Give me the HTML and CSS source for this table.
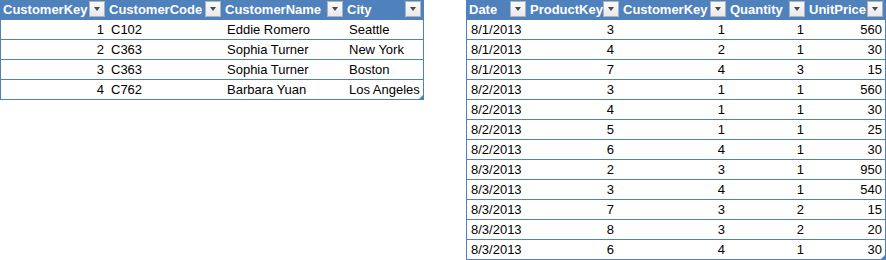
FILE: index.html
```html
<!DOCTYPE html>
<html>
<head>
<meta charset="utf-8">
<link rel="stylesheet" href="styles.css">
</head>
<body>
<div class="page">
  <div class="tbl t1">
    <div class="row head">
      <div class="hc"><span>CustomerKey</span><i class="dd"></i></div>
      <div class="hc"><span>CustomerCode</span><i class="dd"></i></div>
      <div class="hc"><span>CustomerName</span><i class="dd"></i></div>
      <div class="hc"><span>City</span><i class="dd"></i></div>
    </div>
    <div class="row"><div class="c num">1</div><div class="c">C102</div><div class="c">Eddie Romero</div><div class="c">Seattle</div></div>
    <div class="row"><div class="c num">2</div><div class="c">C363</div><div class="c">Sophia Turner</div><div class="c">New York</div></div>
    <div class="row"><div class="c num">3</div><div class="c">C363</div><div class="c">Sophia Turner</div><div class="c">Boston</div></div>
    <div class="row"><div class="c num">4</div><div class="c">C762</div><div class="c">Barbara Yuan</div><div class="c">Los Angeles</div></div>
    <i class="grip"></i>
  </div>
  <div class="tbl t2">
    <div class="row head">
      <div class="hc"><span>Date</span><i class="dd"></i></div>
      <div class="hc"><span>ProductKey</span><i class="dd"></i></div>
      <div class="hc"><span>CustomerKey</span><i class="dd"></i></div>
      <div class="hc"><span>Quantity</span><i class="dd"></i></div>
      <div class="hc"><span>UnitPrice</span><i class="dd"></i></div>
    </div>
    <div class="row"><div class="c">8/1/2013</div><div class="c num pk">3</div><div class="c num">1</div><div class="c num">1</div><div class="c num">560</div></div>
    <div class="row"><div class="c">8/1/2013</div><div class="c num pk">4</div><div class="c num">2</div><div class="c num">1</div><div class="c num">30</div></div>
    <div class="row"><div class="c">8/1/2013</div><div class="c num pk">7</div><div class="c num">4</div><div class="c num">3</div><div class="c num">15</div></div>
    <div class="row"><div class="c">8/2/2013</div><div class="c num pk">3</div><div class="c num">1</div><div class="c num">1</div><div class="c num">560</div></div>
    <div class="row"><div class="c">8/2/2013</div><div class="c num pk">4</div><div class="c num">1</div><div class="c num">1</div><div class="c num">30</div></div>
    <div class="row"><div class="c">8/2/2013</div><div class="c num pk">5</div><div class="c num">1</div><div class="c num">1</div><div class="c num">25</div></div>
    <div class="row"><div class="c">8/2/2013</div><div class="c num pk">6</div><div class="c num">4</div><div class="c num">1</div><div class="c num">30</div></div>
    <div class="row"><div class="c">8/3/2013</div><div class="c num pk">2</div><div class="c num">3</div><div class="c num">1</div><div class="c num">950</div></div>
    <div class="row"><div class="c">8/3/2013</div><div class="c num pk">3</div><div class="c num">4</div><div class="c num">1</div><div class="c num">540</div></div>
    <div class="row"><div class="c">8/3/2013</div><div class="c num pk">7</div><div class="c num">3</div><div class="c num">2</div><div class="c num">15</div></div>
    <div class="row"><div class="c">8/3/2013</div><div class="c num pk">8</div><div class="c num">3</div><div class="c num">2</div><div class="c num">20</div></div>
    <div class="row"><div class="c">8/3/2013</div><div class="c num pk">6</div><div class="c num">4</div><div class="c num">1</div><div class="c num">30</div></div>
    <i class="grip"></i>
  </div>
</div>
</body>
</html>
```
FILE: styles.css
```css
html, body {
  margin: 0;
  padding: 0;
  background: #ffffff;
}
body {
  font-family: "Liberation Sans", Arial, sans-serif;
  font-size: 13px;
  color: #000000;
}
.page {
  display: flex;
  align-items: flex-start;
  gap: 42px;
}
.tbl {
  position: relative;
  box-sizing: border-box;
  border-left: 1px solid #4f81bd;
  border-right: 1px solid #4f81bd;
}
.t1 { width: 424px; }
.t2 { width: 420px; }
.row {
  display: grid;
  height: 20px;
  box-sizing: border-box;
  border-bottom: 1px solid #4f81bd;
}
.t1 .row { grid-template-columns: 106px 116px 122px 78px; }
.t2 .row { grid-template-columns: 61px 93px 107px 79px 78px; }
.row.head {
  background: #4f81bd;
  border-bottom: none;
}
.hc {
  display: flex;
  align-items: flex-start;
  justify-content: space-between;
  color: #ffffff;
  font-weight: bold;
  padding-left: 2px;
  padding-right: 2px;
  overflow: hidden;
  white-space: nowrap;
  line-height: 20px;
}
.hc span { overflow: hidden; }
.dd {
  flex: 0 0 auto;
  width: 16px;
  height: 16px;
  margin-top: 1px;
  box-sizing: border-box;
  border: 1px solid #a9b4c2;
  background: linear-gradient(#fbfbfb, #e9e9e9);
  position: relative;
}
.dd::after {
  content: "";
  position: absolute;
  left: 4px;
  top: 5px;
  border-left: 3.5px solid transparent;
  border-right: 3.5px solid transparent;
  border-top: 4px solid #4a4a4a;
}
.c {
  padding: 0 4px;
  line-height: 19px;
  white-space: nowrap;
  overflow: visible;
}
.num {
  text-align: right;
  padding-right: 3px;
}
.num.pk { padding-right: 7px; }
.grip {
  position: absolute;
  right: 0;
  bottom: 1px;
  width: 0;
  height: 0;
  border-left: 4px solid transparent;
  border-bottom: 4px solid #4f81bd;
}
```
